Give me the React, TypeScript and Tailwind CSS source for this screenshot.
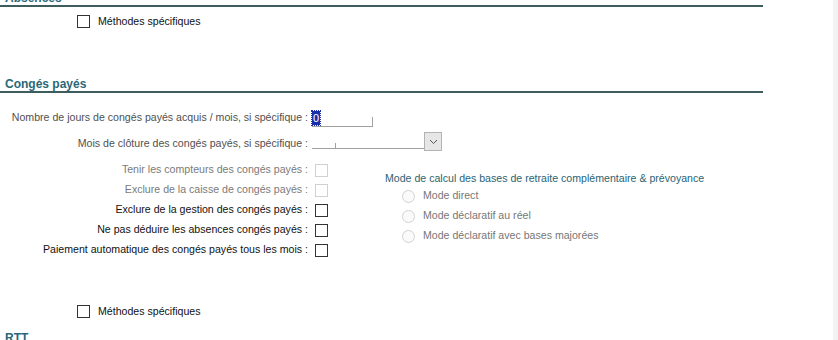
const FONT = { fontFamily: '"Liberation Sans", Arial, sans-serif' };

function Box({ disabled = false }: { disabled?: boolean }) {
  return (
    <span
      className={`block h-[13px] w-[13px] shrink-0 border bg-white ${
        disabled ? 'border-[#d0d0d0]' : 'border-[#333333]'
      }`}
    />
  );
}

function SectionHeader({ title, className = '' }: { title: string; className?: string }) {
  return (
    <div className={`w-[763px] border-b-2 border-[#3e5b5e] pl-[5px] ${className}`}>
      <span className="block text-[12px] font-bold leading-[14px] text-[#2b6777]">{title}</span>
    </div>
  );
}

function CheckRow({ label, disabled = false }: { label: string; disabled?: boolean }) {
  return (
    <div className="flex h-[20px] items-center">
      <span
        className={`w-[308px] text-right text-[10.6px] ${disabled ? 'text-[#7a7a7a]' : 'text-[#111111]'}`}
      >
        {label}
      </span>
      <span className="ml-[7px]">
        <Box disabled={disabled} />
      </span>
    </div>
  );
}

function Radio({ label }: { label: string }) {
  return (
    <div className="flex h-[20px] items-center">
      <span className="ml-[17px] block h-[13px] w-[13px] rounded-full border border-[#d2d2d2] bg-[#fafafa]" />
      <span className="ml-[8px] text-[10.6px] text-[#777777]">{label}</span>
    </div>
  );
}

export default function App() {
  return (
    <div className="relative h-[340px] w-[838px] overflow-hidden bg-white" style={FONT}>
      <div className="absolute right-0 top-0 h-full w-[5px] bg-[#f3f3f3]" />

      <SectionHeader title="Absences" className="-mt-[9px]" />

      <div className="ml-[77px] mt-[8px] flex h-[13px] items-center">
        <Box />
        <span className="ml-[8px] text-[10.6px] text-[#111111]">Méthodes spécifiques</span>
      </div>

      <SectionHeader title="Congés payés" className="mt-[49px]" />

      <div className="mt-[16px] flex h-[18px] items-center">
        <span className="w-[308px] text-right text-[10.6px] text-[#505050]">
          Nombre de jours de congés payés acquis / mois, si spécifique :
        </span>
        <div className="relative ml-[4px] h-[17px] w-[61px] border-b border-[#a0a0a0]">
          <span className="absolute right-0 bottom-0 h-[9px] w-px bg-[#a0a0a0]" />
          <span className="absolute left-0 top-[1px] bg-[#1b2fa8] px-px text-[11px] leading-[14px] text-white outline-1 outline-dotted outline-[#1b2fa8]">
            0
          </span>
        </div>
      </div>

      <div className="mt-[5px] flex h-[19px] items-end">
        <span className="mb-[1px] w-[308px] text-right text-[10.6px] leading-[14px] text-[#505050]">
          Mois de clôture des congés payés, si spécifique :
        </span>
        <div className="relative mb-[2px] ml-[4px] h-[6px] w-[112px] border-b border-[#a0a0a0]">
          <span className="absolute bottom-0 left-[23px] h-[5px] w-px bg-[#a0a0a0]" />
        </div>
        <div className="flex h-[19px] w-[18px] items-center justify-center border border-[#b3b3b3] bg-[#e6e6e6]">
          <svg width="9" height="6" viewBox="0 0 9 6" fill="none">
            <path d="M1 1l3.5 3.5L8 1" stroke="#555555" strokeWidth="1" />
          </svg>
        </div>
      </div>

      <div className="mt-[9px] flex">
        <div className="flex flex-col">
          <CheckRow label="Tenir les compteurs des congés payés :" disabled />
          <CheckRow label="Exclure de la caisse de congés payés :" disabled />
          <CheckRow label="Exclure de la gestion des congés payés :" />
          <CheckRow label="Ne pas déduire les absences congés payés :" />
          <CheckRow label="Paiement automatique des congés payés tous les mois :" />
        </div>
        <div className="ml-[57px] mt-[11px] flex flex-col">
          <span className="text-[10.6px] leading-[14px] text-[#2b6372]">
            Mode de calcul des bases de retraite complémentaire &amp; prévoyance
          </span>
          <div className="mt-[1px]">
            <Radio label="Mode direct" />
            <Radio label="Mode déclaratif au réel" />
            <Radio label="Mode déclaratif avec bases majorées" />
          </div>
        </div>
      </div>

      <div className="ml-[77px] mt-[45px] flex h-[13px] items-center">
        <Box />
        <span className="ml-[8px] text-[10.6px] text-[#111111]">Méthodes spécifiques</span>
      </div>

      <SectionHeader title="RTT" className="mt-[13px]" />
    </div>
  );
}
